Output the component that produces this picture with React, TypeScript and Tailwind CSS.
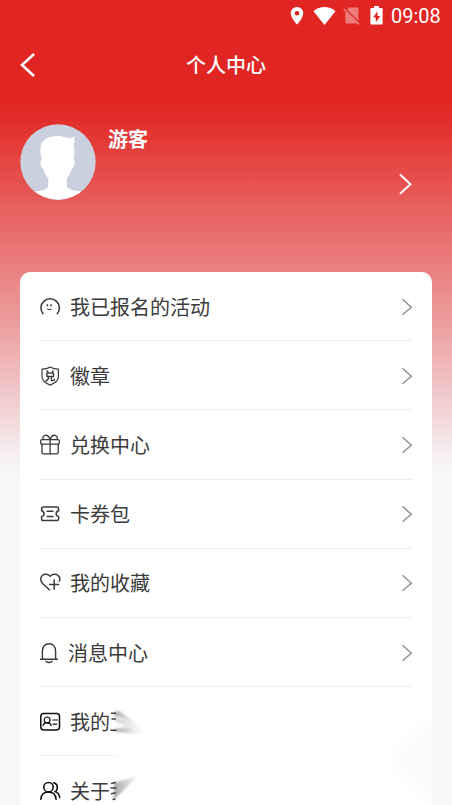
import type { ReactNode } from "react";

type MenuItem = {
  id: string;
  label: string;
  icon: ReactNode;
  gapClass?: string;
  faded?: "down" | "up";
};

const MENU_ITEMS: MenuItem[] = [
  {
    id: "activities",
    label: "我已报名的活动",
    icon: (
      <>
        <path d="M3.3 17.1A9.2 9.2 0 1 1 17 17.1" strokeWidth="1.6" strokeLinecap="butt" />
        <path d="M7.4 7.2v2M11 7.2v2" strokeWidth="1.5" strokeLinecap="butt" />
        <path d="M7.6 12.1q1.7 1.3 3.4 0" strokeWidth="1.2" />
      </>
    ),
  },
  {
    id: "badges",
    label: "徽章",
    icon: (
      <>
        <path d="M10.2.9q3.5 2 8.2 2.3v7.8c0 4-4 6.3-8.2 8.1C6 17.3 2 15 2 11V3.2q5-.3 8.2-2.3Z" strokeWidth="1.2" />
        <path d="m7.1 4.9 1.2 1.8M13.2 4.9 12 6.7M6.9 7.1h6.6v3.4H6.9zM8.7 10.5c0 2.5-.8 3.8-2.8 4.5M11.4 10.5v3.4c0 1.1 3 1.1 3-.7" strokeWidth="1.4" />
      </>
    ),
  },
  {
    id: "exchange",
    label: "兑换中心",
    icon: (
      <>
        <rect x=".7" y="4.6" width="18.6" height="4.6" rx="1.2" />
        <path d="M2 9.2v8.2c0 1.1.4 1.5 1.4 1.5h13.4c1 0 1.4-.4 1.4-1.5V9.2M10.1 4.6v14.3" />
        <path d="M10.1 4.6C9.2 1.7 7.6-.1 5.2.3 3 .7 2.2 3.1 3.4 4.6M10.1 4.6c.9-2.9 2.5-4.7 4.9-4.3 2.2.4 3 2.8 1.8 4.3" />
      </>
    ),
  },
  {
    id: "cards",
    label: "卡券包",
    icon: (
      <>
        <path d="M3.3 3h13.6c1.2 0 1.7.7 1.7 1.7v2.1c-3.3 1.1-3.3 4.9 0 6v2.1c0 1-.5 1.7-1.7 1.7H3.3c-1.2 0-1.7-.7-1.7-1.7v-2.1c3.3-1.1 3.3-4.9 0-6V4.7C1.6 3.7 2.1 3 3.3 3Z" strokeWidth="1.5" />
        <path d="M7.2 7.3h5.8M7.2 12.5h5.8" strokeWidth="1.5" />
      </>
    ),
  },
  {
    id: "favorites",
    label: "我的收藏",
    icon: (
      <>
        <path d="M10 17.3 3 11C.1 8.3.2 4.3 2.5 2.3c2.4-2 5.8-1.2 7.7.9 2-2.1 5.4-2.9 7.7-.9C20.1 4 20.2 6.6 19 8.7" strokeWidth="1.5" strokeLinecap="butt" />
        <path d="M14.2 7v9.2M9.6 11.5h9" strokeWidth="1.5" />
      </>
    ),
  },
  {
    id: "messages",
    label: "消息中心",
    gapClass: "ml-[7px]",
    icon: (
      <>
        <path d="M2.4 16.2V8.1C2.4 3.7 5.1.8 9 .8s6.6 2.9 6.6 7.3v8.1M.5 16.3h17" strokeWidth="1.4" />
        <path d="M6 18.3c.9 1.5 5.1 1.5 6 0" strokeWidth="1.5" />
      </>
    ),
  },
  {
    id: "profile",
    label: "我的",
    faded: "down",
    icon: (
      <g className="text-[#111]">
        <rect x=".8" y="1.6" width="18.7" height="16.3" rx="2.8" strokeWidth="1.5" />
        <circle cx="7.1" cy="7.9" r="2.9" strokeWidth="1.2" />
        <path d="M3 13.7c.5-2 1.6-3 4.1-3s3.6 1 4.1 3M13 8h4.6M13 12.1h3.7" strokeWidth="1.2" />
      </g>
    ),
  },
  {
    id: "about",
    label: "关于",
    faded: "up",
    icon: (
      <g className="text-[#111]">
        <circle cx="8.5" cy="6.2" r="4.7" strokeWidth="1.6" />
        <path d="M.8 18.2c.4-4.4 3.3-7.2 7.7-7.2s7.2 2.8 7.6 7.2" strokeWidth="1.6" />
        <path d="M13.7 1.8c4.8 1.3 4.6 7.2 1.2 8.8 2.5.8 4.3 2.8 4.8 5.8" strokeWidth="1.6" />
      </g>
    ),
  },
];

function StatusBar() {
  return (
    <div className="flex h-[31px] items-center pl-[290px] text-white">
      <svg className="h-[18px] w-[14px]" viewBox="0 0 14 18">
        <path
          fill="currentColor"
          fillRule="evenodd"
          d="M7 0a6.3 6.3 0 0 0-6.3 6.3C.7 11 7 17.7 7 17.7s6.3-6.7 6.3-11.4A6.3 6.3 0 0 0 7 0Zm0 4a2.3 2.3 0 1 1 0 4.6A2.3 2.3 0 0 1 7 4Z"
        />
      </svg>
      <svg className="ml-[9px] h-[18px] w-[23px]" viewBox="0 0 23 18">
        <path fill="currentColor" d="M.5 4.2C7-1.4 16-1.4 22.5 4.2L11.5 18Z" />
      </svg>
      <svg className="ml-[7px] h-[18px] w-[17px] opacity-40" viewBox="0 0 17 18">
        <path fill="currentColor" d="M6 .5h8.4q1 0 1 1v12.2L4 2.5ZM2.3 4.3 14.5 16.5H3.3q-1 0-1-1Z" />
        <path stroke="currentColor" strokeWidth="1.6" d="m.7 2 15.6 15.4" />
      </svg>
      <svg className="ml-[10px] h-[19px] w-[13px]" viewBox="0 0 13 19">
        <path
          fill="currentColor"
          fillRule="evenodd"
          d="M4 0h5v2h2.6q1 0 1 1v14.6q0 1-1 1H1.4q-1 0-1-1V3q0-1 1-1H4ZM7.5 5.2 3 11.5h2.8v4.8L10.3 10H7.5Z"
        />
      </svg>
      <span className="ml-[8px] font-[Roboto,sans-serif] text-[20px] leading-none">09:08</span>
    </div>
  );
}

function NavBar() {
  return (
    <header className="grid h-[67px] grid-cols-[60px_1fr_60px] items-center text-white">
      <svg className="ml-[20px] h-[26px] w-[16px]" viewBox="0 0 16 26" fill="none">
        <path d="M14 2 2 13l12 11" stroke="currentColor" strokeWidth="2.6" />
      </svg>
      <h1 className="text-center text-[20px] font-medium leading-none">个人中心</h1>
    </header>
  );
}

function ProfileHeader() {
  return (
    <section className="flex h-[174px] px-5 pt-[26px] text-white">
      <svg className="size-[76px]" viewBox="0 0 76 76">
        <defs>
          <clipPath id="avatar">
            <circle cx="38" cy="38" r="37.7" />
          </clipPath>
        </defs>
        <g clipPath="url(#avatar)">
          <rect width="76" height="76" fill="#cbd0df" />
          <path
            fill="#fff"
            d="M21.8 35.5c-1.3-4.5-1.9-10-1.1-13.8C22 15.5 29 12 37.5 12c6 0 8.5 2.3 12 2.2 2.4 0 4-.8 5-1.8.2 1.8-.3 3.1-1 4.1.6.1 1.2 0 1.6-.4-.2 1.7-.8 2.7-1.5 3.3 1.2 5 .9 10.5.1 16.1 1.7 1 .9 7.6-1.9 9.5-1.2 4-2.9 7-5 9.5v7.2c0 3 4 4.4 14 5.6V76H14v-8.4c10-1.4 14.3-2.6 14.3-5.9v-7.2c-2.1-2.4-3.7-5.2-5-9.5-2.7-1.8-4.2-8.2-1.5-9.5Z"
          />
        </g>
      </svg>
      <h2 className="ml-[12px] text-[20px] font-bold leading-[29px]">游客</h2>
      <svg className="ml-auto mt-[49px] mr-[19px] h-[22px] w-[15px]" viewBox="0 0 15 22" fill="none">
        <path d="m2 1.4 10.5 9.8L2 20.8" stroke="currentColor" strokeWidth="2" />
      </svg>
    </section>
  );
}

/** Stroke ends of a label plus the soft smear they run into. */
function LabelTrail({ direction }: { direction: "down" | "up" }) {
  const gradientId = `trail-${direction}`;
  const filterId = `soften-${direction}`;

  return (
    <svg className="-ml-px h-[32px] w-[44px]" viewBox="0 0 44 32">
      <defs>
        <linearGradient id={gradientId} x1="5" x2="36" y1="0" y2="0" gradientUnits="userSpaceOnUse">
          <stop offset="0" stopColor="#777" stopOpacity=".65" />
          <stop offset=".4" stopColor="#999" stopOpacity=".45" />
          <stop offset="1" stopColor="#ccc" stopOpacity=".1" />
        </linearGradient>
        <filter id={filterId} x="-20%" y="-30%" width="140%" height="160%">
          <feGaussianBlur stdDeviation="1.2" />
        </filter>
      </defs>
      {direction === "down" ? (
        <>
          <g filter={`url(#${filterId})`} fill={`url(#${gradientId})`}>
            <path d="M5 6 10 5 23 14 5 10Z" />
            <path d="M6 12 23 14 36 29 20 22 6 15Z" opacity=".6" />
            <path d="M5 23 18 21 32 28 7 26Z" />
          </g>
          <path d="M2 7.3h5M2.5 13h4.5M1.5 24.2h6" stroke="#444" strokeWidth="1.5" />
        </>
      ) : (
        <>
          <g filter={`url(#${filterId})`} fill={`url(#${gradientId})`}>
            <path d="M5 8 29 1 20 10 5 14Z" />
            <path d="M5 14 20 10 12 18 5 19Z" />
            <path d="M5 19 13 17 4 25Z" />
          </g>
          <path d="m2 8.5 5-1M1.5 13h6M2 18.8l5-1M3.5 24.5l3-.6" stroke="#444" strokeWidth="1.5" />
        </>
      )}
    </svg>
  );
}

function MenuRow({ item }: { item: MenuItem }) {
  return (
    <li className="relative flex h-[69.2px] shrink-0 items-center">
      <svg
        className="mt-px size-[21px] shrink-0 overflow-visible"
        viewBox="0 0 21 21"
        fill="none"
        stroke="currentColor"
        strokeWidth="1.3"
        strokeLinecap="round"
        strokeLinejoin="round"
      >
        {item.icon}
      </svg>
      <span className={`text-[20px] leading-[28px] ${item.gapClass ?? "ml-[9px]"}`}>{item.label}</span>
      {item.faded ? (
        <LabelTrail direction={item.faded} />
      ) : (
        <svg className="ml-auto mr-[-1px] h-[18px] w-[12px] text-[#929292]" viewBox="0 0 12 18" fill="none">
          <path d="m1.5 1.3 8.8 7.9-8.8 7.6" stroke="currentColor" strokeWidth="1.5" />
        </svg>
      )}
      <span
        className={`absolute bottom-0 left-0 h-px ${
          item.id === "profile" ? "w-[85px] bg-linear-to-r from-[#ededed] from-80% to-white" : "w-full bg-[#ededed]"
        }`}
      />
    </li>
  );
}

export default function App() {
  return (
    <div className="h-[805px] w-[452px] overflow-hidden bg-[#f7f8fa] bg-[linear-gradient(180deg,#e12522_0px,#e12522_100px,#e33633_135px,#e54745_165px,#e76160_210px,#e97c7b_260px,#ec9e9f_325px,#f0c3c5_385px,#f3dbdd_425px,#f6eff1_455px,#f7f8fa_480px)] font-['Noto_Sans_CJK_SC',sans-serif]">
      <StatusBar />
      <NavBar />
      <ProfileHeader />
      <main className="relative mx-5 h-[533px] overflow-hidden rounded-t-[10px] bg-white px-5 text-[#3b3b3b]">
        <ul className="flex flex-col">
          {MENU_ITEMS.map((item) => (
            <MenuRow key={item.id} item={item} />
          ))}
        </ul>
        <div className="absolute right-[-34px] bottom-[12px] size-[64px] rotate-45 bg-[#fafbfc] blur-[6px]" />
      </main>
    </div>
  );
}
